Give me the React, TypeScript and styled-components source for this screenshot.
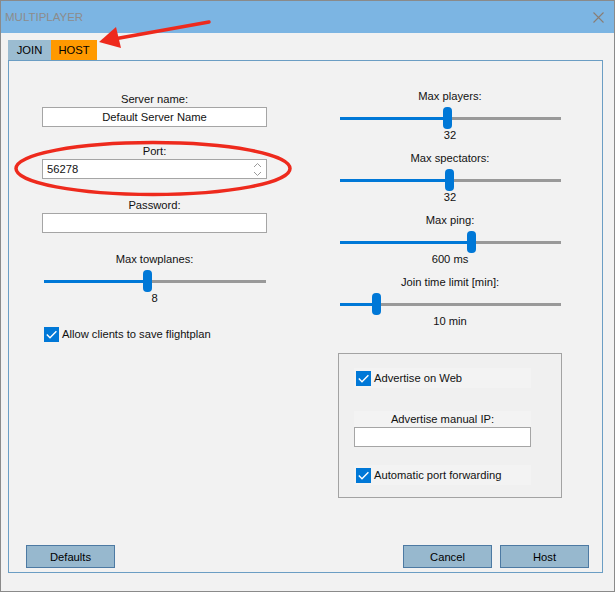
import React from 'react';
import styled, { createGlobalStyle } from 'styled-components';

const GlobalStyle = createGlobalStyle`
  html, body {
    margin: 0;
    padding: 0;
  }
  body {
    font-family: "Liberation Sans", Arial, "Noto Sans", sans-serif;
    font-size: 11.2px;
    color: #111;
  }
`;

interface ISliderField {
  label: string;
  value: string;
  pos: number;
}

const rightSliders: ISliderField[] = [
  { label: 'Max players:', value: '32', pos: 0.486 },
  { label: 'Max spectators:', value: '32', pos: 0.495 },
  { label: 'Max ping:', value: '600 ms', pos: 0.599 },
  { label: 'Join time limit [min]:', value: '10 min', pos: 0.151 },
];

const towplanes: ISliderField = { label: 'Max towplanes:', value: '8', pos: 0.467 };

const THUMB_W = 9;

const Slider = ({ field }: { field: ISliderField }) => (
  <SliderGroup>
    <FieldLabel>{field.label}</FieldLabel>
    <SliderBox>
      <TrackFill style={{ width: `calc((100% - ${THUMB_W}px) * ${field.pos})` }} />
      <Thumb />
      <TrackRest />
    </SliderBox>
    <SliderValue>{field.value}</SliderValue>
  </SliderGroup>
);

const CheckMark = () => (
  <CheckBox>
    <svg width="15" height="15" viewBox="0 0 15 15">
      <path d="M2.8 7.6 L6 10.8 L12.4 4.2" fill="none" stroke="#fff" strokeWidth="1.4" />
    </svg>
  </CheckBox>
);

const SpinArrows = () => (
  <svg width="9" height="15" viewBox="0 0 9 15">
    <path d="M1 5 L4.5 1.5 L8 5" fill="none" stroke="#9a9a9a" strokeWidth="1" />
    <path d="M1 10 L4.5 13.5 L8 10" fill="none" stroke="#9a9a9a" strokeWidth="1" />
  </svg>
);

export default function App() {
  return (
    <>
      <GlobalStyle />
      <Window>
        <TitleBar>
          <TitleText>MULTIPLAYER</TitleText>
          <svg width="11" height="11" viewBox="0 0 11 11">
            <path d="M0.5 0.5 L10.5 10.5 M10.5 0.5 L0.5 10.5" stroke="#8a7d74" strokeWidth="1.1" />
          </svg>
        </TitleBar>
        <Body>
          <Tabs>
            <Tab $bg="#9bbcd1" $w={43}>JOIN</Tab>
            <Tab $bg="#ff9900" $w={46}>HOST</Tab>
          </Tabs>
          <Panel>
            <Columns>
              <LeftColumn>
                <Field $top={0}>
                  <FieldLabel>Server name:</FieldLabel>
                  <TextBox $align="center">Default Server Name</TextBox>
                </Field>
                <Field $top={16}>
                  <FieldLabel>Port:</FieldLabel>
                  <TextBox $align="left">
                    <span>56278</span>
                    <SpinArrows />
                  </TextBox>
                </Field>
                <Field $top={18}>
                  <FieldLabel>Password:</FieldLabel>
                  <TextBox $align="left" />
                </Field>
                <Field $top={18}>
                  <Slider field={towplanes} />
                </Field>
                <CheckRow $top={21}>
                  <CheckMark />
                  <span>Allow clients to save flightplan</span>
                </CheckRow>
              </LeftColumn>
              <RightColumn>
                <SliderList>
                  {rightSliders.map((s) => (
                    <Slider key={s.label} field={s} />
                  ))}
                </SliderList>
                <GroupBox>
                  <GroupRow>
                    <CheckMark />
                    <span>Advertise on Web</span>
                  </GroupRow>
                  <IpLabel>Advertise manual IP:</IpLabel>
                  <TextBox $align="left" />
                  <GroupRow $top={18}>
                    <CheckMark />
                    <span>Automatic port forwarding</span>
                  </GroupRow>
                </GroupBox>
              </RightColumn>
            </Columns>
            <Footer>
              <Button>Defaults</Button>
              <FooterRight>
                <Button>Cancel</Button>
                <Button>Host</Button>
              </FooterRight>
            </Footer>
          </Panel>
        </Body>
        <Annotations width="615" height="592" viewBox="0 0 615 592">
          <line x1="209" y1="22" x2="114" y2="39" stroke="#ee2a1d" strokeWidth="3.5" strokeLinecap="round" />
          <polygon points="99,42 116,27 121,48" fill="#ee2a1d" />
          <ellipse cx="153" cy="168.5" rx="137" ry="26" fill="none" stroke="#ee2a1d" strokeWidth="3.5" />
        </Annotations>
      </Window>
    </>
  );
}

const Window = styled.div`
  position: relative;
  width: 615px;
  height: 592px;
  box-sizing: border-box;
  border: 1px solid #8a8a8a;
  background: #f2f2f2;
  display: flex;
  flex-direction: column;
`;

const TitleBar = styled.div`
  height: 32px;
  flex: none;
  background: #7cb5e3;
  display: flex;
  align-items: center;
  justify-content: space-between;
  padding: 0 10px 0 4px;
`;

const TitleText = styled.span`
  color: #8c8c8c;
  font-size: 11.5px;
`;

const Body = styled.div`
  flex: 1;
  display: flex;
  flex-direction: column;
  padding: 7px 11px 18px 7px;
  min-height: 0;
`;

const Tabs = styled.div`
  display: flex;
  height: 20px;
`;

const Tab = styled.div<{ $bg: string; $w: number }>`
  background: ${({ $bg }) => $bg};
  width: ${({ $w }) => $w}px;
  line-height: 20px;
  text-align: center;
  color: #000;
`;

const Panel = styled.div`
  flex: 1;
  border: 1px solid #6b9ec4;
  display: flex;
  flex-direction: column;
`;

const Columns = styled.div`
  display: grid;
  grid-template-columns: 225px 224px;
  column-gap: 71px;
  padding-left: 33px;
  align-items: start;
`;

const LeftColumn = styled.div`
  display: flex;
  flex-direction: column;
  padding-top: 30px;
`;

const RightColumn = styled.div`
  display: flex;
  flex-direction: column;
  padding-top: 27px;
`;

const Field = styled.div<{ $top: number }>`
  display: flex;
  flex-direction: column;
  margin-top: ${({ $top }) => $top}px;
`;

const FieldLabel = styled.div`
  text-align: center;
  line-height: 16px;
  height: 16px;
  white-space: nowrap;
`;

const TextBox = styled.div<{ $align: 'left' | 'center' }>`
  height: 20px;
  box-sizing: border-box;
  border: 1px solid #a5a5a5;
  background: #fff;
  display: flex;
  align-items: center;
  justify-content: ${({ $align }) => ($align === 'center' ? 'center' : 'space-between')};
  padding: 0 4px;
  line-height: 18px;
`;

const SliderList = styled.div`
  display: flex;
  flex-direction: column;
  gap: 8px;
`;

const SliderGroup = styled.div`
  display: flex;
  flex-direction: column;
`;

const SliderBox = styled.div`
  margin: 3px 1px 0 2px;
  height: 22px;
  display: flex;
  align-items: center;
`;

const TrackFill = styled.div`
  height: 3px;
  background: #0078d7;
  flex: none;
`;

const TrackRest = styled.div`
  height: 3px;
  flex: 1;
  background: #999;
`;

const Thumb = styled.div`
  width: ${THUMB_W}px;
  height: 22px;
  flex: none;
  border-radius: 4px;
  background: #0078d7;
`;

const SliderValue = styled.div`
  margin-top: -1px;
  text-align: center;
  line-height: 14px;
`;

const CheckRow = styled.div<{ $top: number }>`
  display: flex;
  align-items: center;
  gap: 3px;
  height: 16px;
  margin: ${({ $top }) => $top}px 0 0 2px;
`;

const CheckBox = styled.div`
  width: 15px;
  height: 15px;
  flex: none;
  background: #0078d7;
  display: flex;
`;

const GroupBox = styled.div`
  margin-top: 25px;
  border: 1px solid #a3a3a3;
  background: #f0f0f0;
  padding: 14px 30px 12px 15px;
  display: flex;
  flex-direction: column;
`;

const GroupRow = styled.div<{ $top?: number }>`
  display: flex;
  align-items: center;
  gap: 3px;
  height: 20px;
  padding-left: 2px;
  background: #f3f3f3;
  margin-top: ${({ $top = 0 }) => $top}px;
`;

const IpLabel = styled(FieldLabel)`
  margin-top: 23px;
  background: #f3f3f3;
`;

const Footer = styled.div`
  margin-top: auto;
  display: flex;
  justify-content: space-between;
  padding: 0 13px 4px 17px;
`;

const FooterRight = styled.div`
  display: flex;
  gap: 8px;
`;

const Button = styled.div`
  width: 89px;
  height: 23px;
  box-sizing: border-box;
  border: 1px solid #4d7aa3;
  background: #97b8ce;
  display: flex;
  align-items: center;
  justify-content: center;
  color: #000;
`;

const Annotations = styled.svg`
  position: absolute;
  left: -1px;
  top: -1px;
  pointer-events: none;
`;
